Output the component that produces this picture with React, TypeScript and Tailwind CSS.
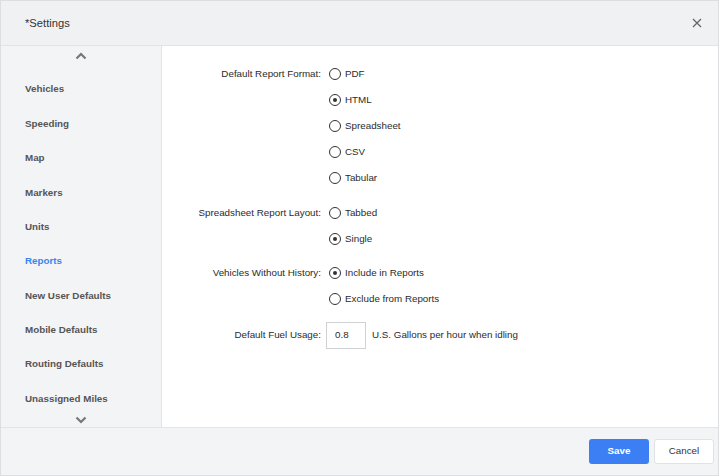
import React from "react";

const navItems = [
  "Vehicles",
  "Speeding",
  "Map",
  "Markers",
  "Units",
  "Reports",
  "New User Defaults",
  "Mobile Defaults",
  "Routing Defaults",
  "Unassigned Miles",
];

function Radio({ checked, label }: { checked?: boolean; label: string }) {
  return (
    <div className="flex h-[26px] items-center gap-[4px]">
      <span className="flex h-[12px] w-[12px] items-center justify-center rounded-full border-[1.5px] border-[#333]">
        {checked && <span className="h-[4px] w-[4px] rounded-full bg-[#333]" />}
      </span>
      <span className="text-[9.8px] text-[#2b2b2b]">{label}</span>
    </div>
  );
}

function Group({ label, options, selected }: { label: string; options: string[]; selected: string }) {
  return (
    <div className="flex gap-[8px]">
      <div className="h-[26px] w-[159px] text-right text-[9.8px] leading-[26px] text-[#2b2b2b]">{label}</div>
      <div className="flex flex-col">
        {options.map((o) => (
          <Radio key={o} label={o} checked={o === selected} />
        ))}
      </div>
    </div>
  );
}

function Chevron({ up }: { up?: boolean }) {
  return (
    <svg width="12" height="8" viewBox="0 0 12 8" className={up ? "" : "rotate-180"}>
      <path d="M1.5 6.5 L6 2 L10.5 6.5" fill="none" stroke="#777" strokeWidth="2.2" />
    </svg>
  );
}

export default function App() {
  return (
    <div
      className="flex h-[476px] w-[719px] flex-col border border-[#dcdee1] bg-white"
      style={{ fontFamily: '"Liberation Sans", Arial, sans-serif' }}
    >
      <div className="flex h-[45px] items-center justify-between border-b border-[#e2e4e7] bg-[#f0f1f3] pl-[24px] pr-[16px]">
        <span className="text-[11.2px] text-[#333]">*Settings</span>
        <svg width="10" height="10" viewBox="0 0 10 10">
          <path d="M1 1 L9 9 M9 1 L1 9" stroke="#666" strokeWidth="1.3" />
        </svg>
      </div>

      <div className="flex min-h-0 flex-1">
        <div className="flex w-[161px] flex-col border-r border-[#e2e4e7] bg-[#f3f4f6]">
          <div className="flex h-[26px] justify-center pt-[6px]">
            <Chevron up />
          </div>
          {navItems.map((n) => (
            <div
              key={n}
              className={`flex h-[34.4px] items-center pl-[24px] pt-[1px] text-[9.8px] font-bold ${
                n === "Reports" ? "text-[#3a84f0]" : "text-[#555]"
              }`}
            >
              {n}
            </div>
          ))}
          <div className="flex justify-center">
            <Chevron />
          </div>
        </div>

        <div className="flex flex-1 flex-col pt-[15px]">
          <Group
            label="Default Report Format:"
            options={["PDF", "HTML", "Spreadsheet", "CSV", "Tabular"]}
            selected="HTML"
          />
          <div className="mt-[9px]">
            <Group label="Spreadsheet Report Layout:" options={["Tabbed", "Single"]} selected="Single" />
          </div>
          <div className="mt-[8px]">
            <Group
              label="Vehicles Without History:"
              options={["Include in Reports", "Exclude from Reports"]}
              selected="Include in Reports"
            />
          </div>
          <div className="mt-[10px] flex items-center">
            <div className="w-[159px] text-right text-[9.8px] text-[#2b2b2b]">Default Fuel Usage:</div>
            <div className="ml-[5px] flex h-[27px] w-[40px] items-center border border-[#d0d2d5] pl-[8px] text-[9.8px] text-[#2b2b2b]">
              0.8
            </div>
            <span className="ml-[6px] text-[9.8px] text-[#2b2b2b]">U.S. Gallons per hour when idling</span>
          </div>
        </div>
      </div>

      <div className="flex h-[48px] items-center justify-end gap-[5px] border-t border-[#e2e4e7] bg-[#f3f4f6] pr-[4px]">
        <button className="h-[25px] w-[60px] rounded-[3px] bg-[#3c7ff5] text-[9.8px] font-bold text-white">Save</button>
        <button className="h-[25px] w-[60px] rounded-[3px] border border-[#e0e2e5] bg-white text-[9.8px] text-[#333]">
          Cancel
        </button>
      </div>
    </div>
  );
}
